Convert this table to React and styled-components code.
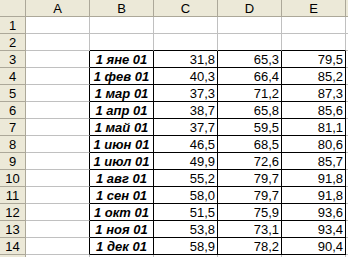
import React from "react";
import styled, { createGlobalStyle } from "styled-components";

const Global = createGlobalStyle`
  html, body { margin: 0; padding: 0; background: #fff; overflow: hidden; }
  body { font-family: "Liberation Sans", Arial, sans-serif; }
`;

const Sheet = styled.div`
  display: grid;
  grid-template-columns: 26px repeat(6, 64px);
  grid-auto-rows: 17px;
  width: 348px;
  height: 257px;
  overflow: hidden;
  font-size: 13px;
`;

const Head = styled.div`
  background: #ece9d8;
  border-right: 1px solid #aca899;
  border-bottom: 1px solid #aca899;
  box-sizing: border-box;
  display: flex;
  align-items: center;
  justify-content: center;
  color: #000;
  line-height: 16px;
  padding-top: 1px;
`;

const Cell = styled.div`
  box-sizing: border-box;
  background: #fff;
  border-right: 1px solid ${p => (p.right ? "#000" : "#c0c0c0")};
  border-bottom: 1px solid ${p => (p.bottom ? "#000" : "#c0c0c0")};
  display: flex;
  align-items: center;
  justify-content: ${p => (p.date ? "center" : "flex-end")};
  padding: 1px 2px 0 2px;
  font-style: ${p => (p.date ? "italic" : "normal")};
  font-weight: ${p => (p.date ? "bold" : "normal")};
  white-space: nowrap;
`;

const data = [
  ["1 яне 01", "31,8", "65,3", "79,5"],
  ["1 фев 01", "40,3", "66,4", "85,2"],
  ["1 мар 01", "37,3", "71,2", "87,3"],
  ["1 апр 01", "38,7", "65,8", "85,6"],
  ["1 май 01", "37,7", "59,5", "81,1"],
  ["1 июн 01", "46,5", "68,5", "80,6"],
  ["1 июл 01", "49,9", "72,6", "85,7"],
  ["1 авг 01", "55,2", "79,7", "91,8"],
  ["1 сен 01", "58,0", "79,7", "91,8"],
  ["1 окт 01", "51,5", "75,9", "93,6"],
  ["1 ноя 01", "53,8", "73,1", "93,4"],
  ["1 дек 01", "58,9", "78,2", "90,4"],
];

const letters = ["A", "B", "C", "D", "E", ""];

export default function App() {
  const rows = [];
  for (let r = 1; r <= 15; r++) {
    const vals = r >= 3 && r <= 14 ? data[r - 3] : null;
    rows.push(<Head key={"h" + r}>{r <= 14 ? r : ""}</Head>);
    for (let c = 0; c < 6; c++) {
      const inTable = vals && c >= 1 && c <= 4;
      const right = vals && c >= 0 && c <= 4;
      const bottom = (r === 2 && c >= 1 && c <= 4) || inTable;
      rows.push(
        <Cell key={r + "-" + c} right={right} bottom={bottom} date={inTable && c === 1}>
          {inTable ? vals[c - 1] : ""}
        </Cell>
      );
    }
  }
  return (
    <>
      <Global />
      <Sheet>
        <Head />
        {letters.map((l, i) => (
          <Head key={i}>{l}</Head>
        ))}
        {rows}
      </Sheet>
    </>
  );
}
